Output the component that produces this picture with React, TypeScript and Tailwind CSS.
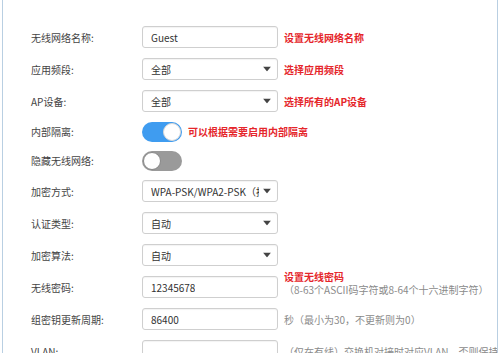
import React from 'react';

const font = { fontFamily: '"Noto Sans CJK SC", "Liberation Sans", sans-serif' };

const Caret = () => (
  <svg width="8" height="5" viewBox="0 0 8 5" className="absolute right-[6px] top-1/2 -translate-y-1/2">
    <path d="M0 0 L8 0 L4 5 Z" fill="#444" />
  </svg>
);

const Field = ({ value, select }: { value: string; select?: boolean }) => (
  <div className="relative shrink-0 w-[136px] h-[22px] border border-[#cfcfcf] rounded-[3px] bg-white shadow-[inset_0_1px_1px_rgba(0,0,0,0.05)] flex items-center pl-[8px] pr-[18px] text-[10px] text-[#333] overflow-hidden whitespace-nowrap">
    <span className="overflow-hidden">{value}</span>
    {select && <Caret />}
  </div>
);

const Toggle = ({ on }: { on: boolean }) => (
  <div
    className={
      on
        ? 'relative shrink-0 w-[40px] h-[20px] rounded-full bg-[#3f9cf0]'
        : 'relative shrink-0 w-[40px] h-[20px] rounded-full bg-[#9a9a9a]'
    }
  >
    <div
      className={
        on
          ? 'absolute right-[1px] top-[1px] w-[18px] h-[18px] rounded-full bg-white border border-[#d8d8d8]'
          : 'absolute left-[1px] top-[1px] w-[18px] h-[18px] rounded-full bg-white border border-[#888]'
      }
    />
  </div>
);

const Row = ({ label, children, tall = true }: { label: string; children: React.ReactNode; tall?: boolean }) => (
  <div className={tall ? 'flex items-center h-[32px]' : 'flex items-center h-[29px]'}>
    <div className="shrink-0 w-[111px] text-[10px] text-[#444]">{label}</div>
    {children}
  </div>
);

const Red = ({ children }: { children: React.ReactNode }) => (
  <span className="ml-[6px] text-[10px] leading-[13px] font-bold text-[#e5262b] whitespace-nowrap">{children}</span>
);

const Gray = ({ children }: { children: React.ReactNode }) => (
  <span className="ml-[6px] text-[10px] leading-[13px] text-[#8a8a8a] whitespace-nowrap">{children}</span>
);

export default function App() {
  return (
    <div className="w-[500px] h-[353px] overflow-hidden bg-white" style={font}>
      <div className="h-full mx-[2px] border-x border-[#b9cfe2] pt-[21px] pl-[28px] overflow-hidden">
        <Row label="无线网络名称:">
          <Field value="Guest" />
          <Red>设置无线网络名称</Red>
        </Row>
        <Row label="应用频段:">
          <Field value="全部" select />
          <Red>选择应用频段</Red>
        </Row>
        <Row label="AP设备:">
          <Field value="全部" select />
          <Red>选择所有的AP设备</Red>
        </Row>
        <Row label="内部隔离:" tall={false}>
          <Toggle on />
          <Red>可以根据需要启用内部隔离</Red>
        </Row>
        <Row label="隐藏无线网络:" tall={false}>
          <Toggle on={false} />
        </Row>
        <Row label="加密方式:">
          <Field value="WPA-PSK/WPA2-PSK（推" select />
        </Row>
        <Row label="认证类型:">
          <Field value="自动" select />
        </Row>
        <Row label="加密算法:">
          <Field value="自动" select />
        </Row>
        <Row label="无线密码:">
          <Field value="12345678" />
          <div className="flex flex-col -mt-[9px]">
            <Red>设置无线密码</Red>
            <Gray>（8-63个ASCII码字符或8-64个十六进制字符）</Gray>
          </div>
        </Row>
        <Row label="组密钥更新周期:">
          <Field value="86400" />
          <Gray>秒（最小为30，不更新则为0）</Gray>
        </Row>
        <Row label="VLAN:">
          <Field value="" />
          <Gray>（仅在有线）交换机对接时对应VLAN，否则保持默认值）</Gray>
        </Row>
      </div>
    </div>
  );
}
